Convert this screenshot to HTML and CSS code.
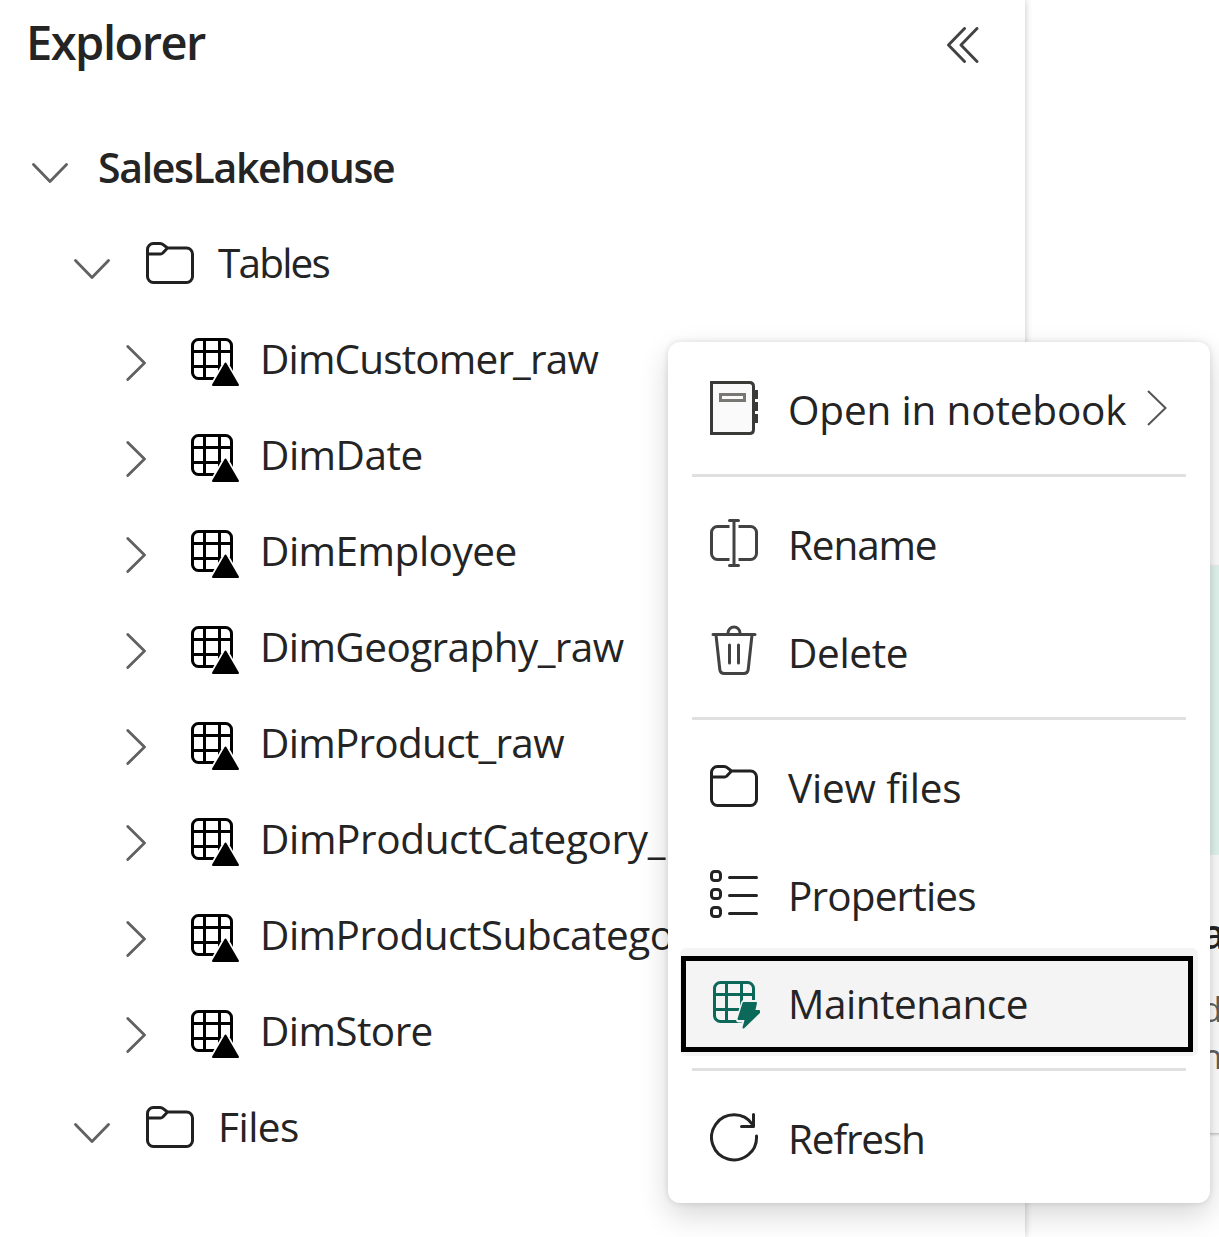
FILE: index.html
```html
<!DOCTYPE html>
<html lang="en">
<head>
<meta charset="utf-8">
<title>Explorer</title>
<link rel="stylesheet" href="styles.css">
</head>
<body>
<svg class="defs" aria-hidden="true">
  <symbol id="down" viewBox="0 0 36 20"><path d="M1.500 1.500 18 18.500 34.500 1.500" fill="none" stroke="#616161" stroke-width="2.800" stroke-linecap="round" stroke-linejoin="round"/></symbol>
  <symbol id="right" viewBox="0 0 20 36"><path d="M1.800 1.500 18.500 18 1.800 34.500" fill="none" stroke="#616161" stroke-width="2.800" stroke-linecap="round" stroke-linejoin="round"/></symbol>
  <symbol id="folder" viewBox="0 0 48 54"><path d="M1.500 18V13.500a6 6 0 0 1 6-6H14q2 0 3.500 1.300L21.500 12H40.500a6 6 0 0 1 6 6V40.500a6 6 0 0 1-6 6H7.500a6 6 0 0 1-6-6ZM1.500 18H14.500q1.300 0 2.300-1L21.500 12" fill="none" stroke="#212121" stroke-width="3" stroke-linejoin="round"/></symbol>
  <symbol id="grid" viewBox="0 0 48 48"><path d="M7.500 1.500h27a6 6 0 0 1 6 6v27a6 6 0 0 1-6 6h-27a6 6 0 0 1-6-6v-27a6 6 0 0 1 6-6ZM13.500 1.500v39M28.500 1.500v39M1.500 13.500h39M1.500 28.500h39" fill="none" stroke="currentColor" stroke-width="3"/></symbol>
  <symbol id="table" viewBox="0 0 48 48"><use href="#grid" width="48" height="48"/><path d="M34.500 24 20 49H49Z" fill="#fff" stroke="#fff" stroke-width="4" stroke-linejoin="round"/><path d="M34.500 25.500 22 47H47Z" fill="#000" stroke="#000" stroke-width="2" stroke-linejoin="round"/></symbol>
</svg>
<div class="app">
  <aside class="explorer">
    <header class="head">
      <h1>Explorer</h1>
      <svg class="collapse" viewBox="0 0 32 36"><path d="M17.500 1.500 1.500 18 17.500 34.500M30 1.500 14 18 30 34.500" fill="none" stroke="#424242" stroke-width="2.900" stroke-linecap="round" stroke-linejoin="round"/></svg>
    </header>
    <div class="tree">
      <div class="node root"><svg class="down"><use href="#down"/></svg><span class="label">SalesLakehouse</span></div>
      <div class="node group"><svg class="down"><use href="#down"/></svg><svg class="folder"><use href="#folder"/></svg><span class="label tight-6">Tables</span></div>
      <div class="node item"><svg class="right"><use href="#right"/></svg><svg class="table"><use href="#table"/></svg><span class="label tight-4">DimCustomer_raw</span></div>
      <div class="node item"><svg class="right"><use href="#right"/></svg><svg class="table"><use href="#table"/></svg><span class="label tight-2">DimDate</span></div>
      <div class="node item"><svg class="right"><use href="#right"/></svg><svg class="table"><use href="#table"/></svg><span class="label tight-2">DimEmployee</span></div>
      <div class="node item"><svg class="right"><use href="#right"/></svg><svg class="table"><use href="#table"/></svg><span class="label tight-3">DimGeography_raw</span></div>
      <div class="node item"><svg class="right"><use href="#right"/></svg><svg class="table"><use href="#table"/></svg><span class="label">DimProduct_raw</span></div>
      <div class="node item"><svg class="right"><use href="#right"/></svg><svg class="table"><use href="#table"/></svg><span class="label tight-1">DimProductCategory_raw</span></div>
      <div class="node item"><svg class="right"><use href="#right"/></svg><svg class="table"><use href="#table"/></svg><span class="label tight-2">DimProductSubcategory_raw</span></div>
      <div class="node item"><svg class="right"><use href="#right"/></svg><svg class="table"><use href="#table"/></svg><span class="label tight-3">DimStore</span></div>
      <div class="node group"><svg class="down"><use href="#down"/></svg><svg class="folder"><use href="#folder"/></svg><span class="label tight-2">Files</span></div>
    </div>
  </aside>
  <main class="main">
    <section class="card">
      <div class="banner"></div>
      <h2>a</h2>
      <p>d<br>n</p>
    </section>
  </main>

  <div class="menu" role="menu">
    <div class="entry">
      <svg class="icon" viewBox="0 0 54 54"><path d="M1.500 1.500H39.500q4 0 4 4V48.500q0 4-4 4H1.500Z" fill="#fafafa" stroke="#3a3a38" stroke-width="3"/><path d="M45 9h3v9h-3zM45 21h3v9h-3zM45 33h3v9h-3z" fill="#3a3a38"/><path d="M10.500 13.500h24v6h-24z" fill="#fafafa" stroke="#797774" stroke-width="3"/></svg>
      <span class="label tight-0">Open in notebook</span>
      <svg class="more" viewBox="0 0 20 36"><path d="M1 1 18.500 18 1 35" fill="none" stroke="#555" stroke-width="2"/></svg>
    </div>
    <hr>
    <div class="entry">
      <svg class="icon" viewBox="0 0 54 54"><path d="M19.500 10.500H7.500a6 6 0 0 0-6 6V37.500a6 6 0 0 0 6 6H19.500M28.500 10.500H40.500a6 6 0 0 1 6 6V37.500a6 6 0 0 1-6 6H28.500" fill="none" stroke="#424242" stroke-width="3"/><path d="M19.500 4.500h9M24 4.500v45M19.500 49.500h9" fill="none" stroke="#424242" stroke-width="3" stroke-linecap="round"/></svg>
      <span class="label tight-5">Rename</span>
    </div>
    <div class="entry">
      <svg class="icon" viewBox="0 0 54 54"><path d="M3 10.500H45M18 10V9a6 6 0 0 1 12 0v1M6 11 9.800 45.500q.5 4 4.500 4H33.700q4 0 4.500-4L42 11M19.500 21V39M28.500 21V39" fill="none" stroke="#424242" stroke-width="3" stroke-linecap="round"/></svg>
      <span class="label tight-1">Delete</span>
    </div>
    <hr>
    <div class="entry">
      <svg class="icon" viewBox="0 0 54 54"><use href="#folder" width="48" height="54"/></svg>
      <span class="label tight-0">View files</span>
    </div>
    <div class="entry">
      <svg class="icon" viewBox="0 0 54 54"><g fill="none" stroke="#242424" stroke-width="3"><rect x="1.500" y="4.500" width="9" height="9" rx="3"/><rect x="1.500" y="22.500" width="9" height="9" rx="3"/><rect x="1.500" y="40.500" width="9" height="9" rx="3"/><path d="M19.500 10.500h27M19.500 28.500h27M19.500 46.500h27" stroke-linecap="round"/></g></svg>
      <span class="label tight-4">Properties</span>
    </div>
    <div class="entry selected">
      <svg class="icon green" viewBox="0 0 54 54"><use href="#grid" x="3" y="6" width="48" height="48"/><path d="M34 28H46L44 35.500H48.500L34.500 52 35.500 44.500H29Z" fill="#f4f4f4" stroke="#f4f4f4" stroke-width="6" stroke-linejoin="round"/><path d="M33.500 28H46L44.200 36H49V37.500L33.500 52.500 35.800 44H28.500Z" fill="currentColor" stroke="currentColor" stroke-width="2" stroke-linejoin="round"/></svg>
      <span class="label tight-2">Maintenance</span>
    </div>
    <hr>
    <div class="entry">
      <svg class="icon" viewBox="0 0 54 54"><path d="M46.500 26A22.500 22.500 0 1 1 42.500 14.500M43.500 4.500V16.500H31.500" fill="none" stroke="#242424" stroke-width="3" stroke-linecap="round" stroke-linejoin="round"/></svg>
      <span class="label tight-5">Refresh</span>
    </div>
  </div>
</div>
</body>
</html>
```
FILE: styles.css
```css
*, *::after { box-sizing: border-box; }

body {
  margin: 0;
  color: #242424;
  background: #fff;
  font-family: "Open Sans", "Noto Sans", sans-serif;
}

svg { display: block; flex: none; }
.defs { position: absolute; width: 0; height: 0; }

.app {
  position: relative;
  display: flex;
  width: 1219px;
  height: 1237px;
  overflow: hidden;
}

/* Explorer panel */
.explorer {
  position: relative;
  z-index: 1;
  flex: none;
  width: 1025px;
  background: #fff;
  box-shadow: 0 0 7px rgba(0, 0, 0, .24);
}

.head {
  display: flex;
  justify-content: space-between;
  height: 118px;
  padding: 0 46px 0 26px;
}

h1 {
  margin: 0;
  font-size: 47px;
  font-weight: 600;
  line-height: 84px;
  letter-spacing: -1.5px;
}

.collapse { width: 32px; height: 36px; margin-top: 27px; }

.node { display: flex; align-items: center; height: 96px; }
.node.root { padding-left: 32px; }
.node.group { padding-left: 74px; }
.node.item { padding-left: 126px; }

.down { width: 36px; height: 20px; margin-top: 14px; }
.right { width: 20px; height: 36px; margin-top: 10px; }
.folder { width: 48px; height: 54px; margin: 2px 0 0 36px; }
.table { width: 48px; height: 48px; margin: 8px 0 0 45px; color: #000; }

.label {
  font-size: 40.5px;
  line-height: 60px;
  letter-spacing: -.73px;
  white-space: nowrap;
}

.root .label {
  margin: 1px 0 0 30px;
  font-size: 41px;
  font-weight: 600;
  letter-spacing: -1.35px;
}
.group .label { margin: 2px 0 0 24px; }
.item .label { margin: 2px 0 0 21px; }

.tight-0 { letter-spacing: -.17px; }
.tight-1 { letter-spacing: -.36px; }
.tight-2 { letter-spacing: -.5px; }
.tight-3 { letter-spacing: -.58px; }
.tight-4 { letter-spacing: -.84px; }
.tight-5 { letter-spacing: -1.15px; }
.tight-6 { letter-spacing: -1.8px; }

/* Page content beside the panel */
.main { flex: 1; padding-top: 566px; }

.card {
  width: 400px;
  height: 567px;
  margin-left: 174px;
  background: #fff;
  box-shadow: 0 1px 3px rgba(0, 0, 0, .3);
}

.banner { height: 289px; background: #e3f7f0; }

.card h2 {
  margin: 48px 0 0 2px;
  font-size: 42px;
  font-weight: 600;
  line-height: 60px;
}

.card p {
  margin: 22px 0 0 2px;
  color: #616161;
  font-size: 35px;
  line-height: 47px;
}

/* Context menu */
.menu {
  position: absolute;
  z-index: 2;
  top: 342px;
  left: 668px;
  width: 542px;
  height: 861px;
  padding: 12px;
  border-radius: 12px;
  background: #fff;
  box-shadow: 0 0 6px rgba(0, 0, 0, .12), 0 12px 30px rgba(0, 0, 0, .16);
}

.menu hr {
  height: 3px;
  margin: 12px;
  border: 0;
  background: #e0e0e0;
}

.entry {
  display: flex;
  align-items: center;
  height: 108px;
  padding-left: 30px;
  border-radius: 6px;
}

.icon { width: 54px; height: 54px; }
.entry .label { margin: 4px 0 0 24px; }
.more { width: 20px; height: 36px; margin-left: 21px; }
.green { color: #0c695a; }

.selected { position: relative; background: #f4f4f4; }
.selected::after {
  content: "";
  position: absolute;
  top: 8px;
  left: 1px;
  width: 512px;
  height: 96px;
  border: 5px solid #000;
}
```
